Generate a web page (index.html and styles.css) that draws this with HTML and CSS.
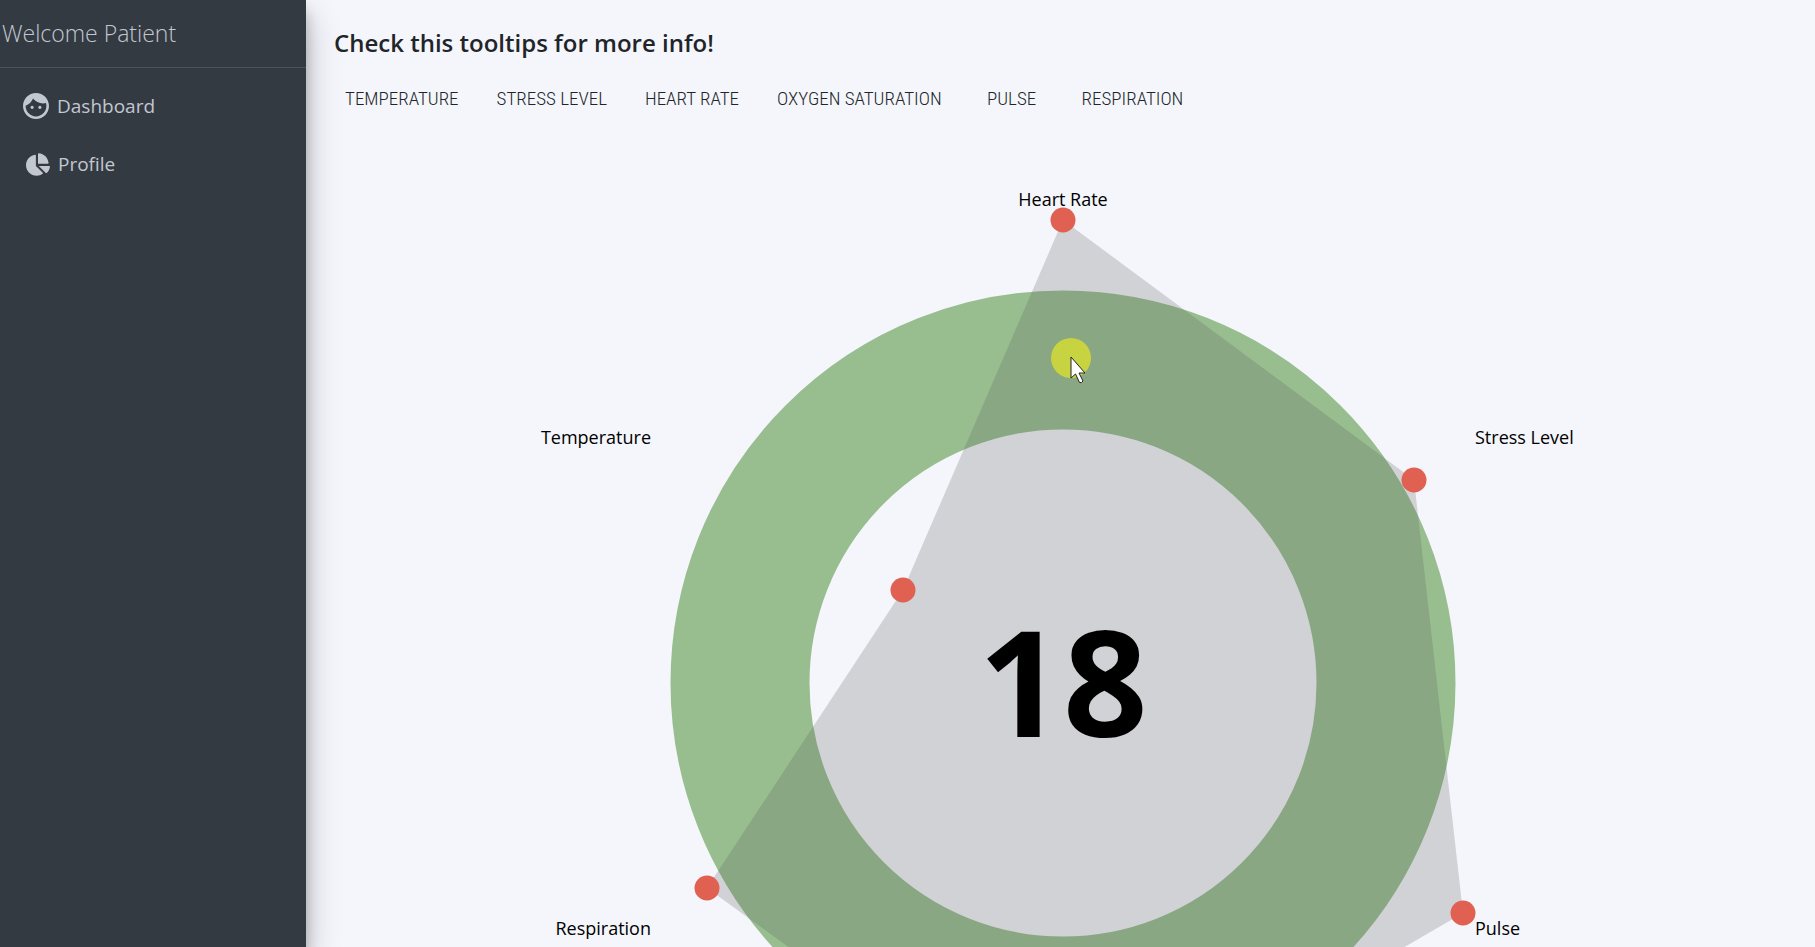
FILE: index.html
```html
<!DOCTYPE html>
<html lang="en">
<head>
<meta charset="utf-8">
<title>Patient Dashboard</title>
<link rel="stylesheet" href="styles.css">
</head>
<body>
<div class="app">
  <aside class="sidebar">
    <div class="brand">Welcome Patient</div>
    <nav class="nav">
      <a class="nav-link" href="#dashboard">
        <svg class="icon-face" viewBox="2 2 20 20" aria-hidden="true">
          <path d="M10.250 13a1.250 1.250 0 1 1-2.500 0 1.250 1.250 0 0 1 2.500 0zM15 11.750a1.250 1.250 0 1 0 0 2.500 1.250 1.250 0 0 0 0-2.500zM22 12c0 5.520-4.480 10-10 10S2 17.520 2 12 6.480 2 12 2s10 4.480 10 10zm-2 0c0-.780-.120-1.530-.330-2.240-.700.150-1.420.240-2.170.240-3.130 0-5.920-1.440-7.760-3.690C8.690 8.870 6.600 10.880 4 11.860c.010.040 0 .090 0 .140 0 4.410 3.590 8 8 8s8-3.590 8-8z"/>
        </svg>
        <span>Dashboard</span>
      </a>
      <a class="nav-link profile" href="#profile">
        <svg class="icon-pie" viewBox="0 0 544 512" aria-hidden="true">
          <path d="M527.790 288H290.500l158.030 158.030c6.040 6.040 15.980 6.530 22.190.680 38.700-36.460 65.320-85.610 73.130-140.860 1.340-9.460-6.510-17.850-16.060-17.850zm-15.830-64.800C503.720 103.740 408.260 8.280 288.800.040 279.680-.590 272 7.100 272 16.240V240h223.770c9.140 0 16.820-7.680 16.190-16.800zM224 288V50.710c0-9.550-8.390-17.400-17.840-16.060C86.990 51.490-4.100 155.600.140 280.370 4.500 408.510 114.830 513.590 243.030 511.980c50.400-.630 96.970-16.870 135.260-44.030 7.900-5.600 8.420-17.230 1.570-24.080L224 288z"/>
        </svg>
        <span>Profile</span>
      </a>
    </nav>
  </aside>

  <main class="content">
    <h1 class="title">Check this tooltips for more info!</h1>
    <div class="tabs">
      <button class="tab" type="button">Temperature</button>
      <button class="tab" type="button">Stress Level</button>
      <button class="tab" type="button">Heart Rate</button>
      <button class="tab" type="button">Oxygen Saturation</button>
      <button class="tab" type="button">Pulse</button>
      <button class="tab" type="button">Respiration</button>
    </div>
    <svg class="chart" viewBox="-550 -560 1100 1100" role="img" aria-label="Health score">
      <circle class="ring" r="323"/>
      <polygon class="area" points="0,-463 351,-203 400,230 0,463 -356,205 -160,-93"/>
      <text class="score" x="0" y="54">18</text>
      <g class="labels">
        <text class="mid" x="0" y="-477">Heart Rate</text>
        <text x="412" y="-239">Stress Level</text>
        <text x="412" y="252">Pulse</text>
        <text class="end" x="-412" y="252">Respiration</text>
        <text class="end" x="-412" y="-239">Temperature</text>
      </g>
      <g class="dots">
        <circle cx="0" cy="-463" r="12.500"/>
        <circle cx="351" cy="-203" r="12.500"/>
        <circle cx="400" cy="230" r="12.500"/>
        <circle cx="0" cy="463" r="12.500"/>
        <circle cx="-356" cy="205" r="12.500"/>
        <circle cx="-160" cy="-93" r="12.500"/>
      </g>
      <circle class="halo" cx="8" cy="-325" r="20"/>
      <path class="pointer" d="M8-326v21l4.500-4 4 8.500q2 1 3.500-1.500l-4-8h6z"/>
    </svg>
  </main>
</div>
</body>
</html>
```
FILE: styles.css
```css
* {
  box-sizing: border-box;
}

body {
  margin: 0;
  background: #f4f6fb;
  color: #212529;
  font-family: "Open Sans", "Noto Sans", sans-serif;
}

.app {
  display: flex;
  height: 100vh;
  overflow: hidden;
}

.sidebar {
  position: relative;
  flex: 0 0 306px;
  background: #343a42;
  color: #c2c7d0;
  box-shadow: 0 16px 32px rgba(0, 0, 0, 0.25), 0 12px 12px rgba(0, 0, 0, 0.22);
}

.brand {
  height: 68px;
  padding-left: 2px;
  border-bottom: 1px solid #4b545c;
  font-size: 23px;
  font-weight: 300;
  line-height: 66px;
}

.nav {
  display: flex;
  flex-direction: column;
  gap: 18px;
  padding: 18px 23px;
}

.nav-link {
  display: flex;
  align-items: center;
  gap: 8px;
  height: 40px;
  color: inherit;
  font-size: 19px;
  line-height: 40px;
  text-decoration: none;
}

.profile {
  padding-left: 3px;
}

.nav-link svg {
  fill: currentColor;
}

.icon-face {
  width: 26px;
  height: 26px;
}

.icon-pie {
  width: 24px;
  height: 23px;
}

.content {
  display: flex;
  flex: 1;
  flex-direction: column;
  min-width: 0;
  padding: 24px 24px 0 28px;
}

.title {
  margin: 0;
  font-size: 24px;
  font-weight: 600;
  line-height: 38px;
}

.tabs {
  display: flex;
  flex: none;
  gap: 38px;
  margin-top: 18px;
  padding-left: 11px;
}

.tab {
  min-width: 64px;
  padding: 0;
  border: 0;
  background: none;
  color: #212529;
  font-family: "Roboto Condensed", "Liberation Sans Narrow", Roboto, sans-serif;
  font-size: 19px;
  font-weight: 300;
  line-height: 38px;
  text-transform: uppercase;
}

.chart {
  flex: none;
  align-self: center;
  width: 1100px;
  margin-top: 5px;
}

.area {
  fill: rgba(92, 90, 85, 0.23);
}

.ring {
  fill: none;
  stroke: #98be90;
  stroke-width: 139px;
}

.score {
  font-size: 148px;
  font-weight: 700;
  text-anchor: middle;
}

.labels {
  font-size: 18px;
}

.mid {
  text-anchor: middle;
}

.end {
  text-anchor: end;
}

.chart text {
  fill: #000;
}

.dots {
  fill: #e06052;
}

.halo {
  fill: #c7d340;
}

.pointer {
  fill: #fff;
  stroke: #222;
  stroke-width: 1px;
}
```
